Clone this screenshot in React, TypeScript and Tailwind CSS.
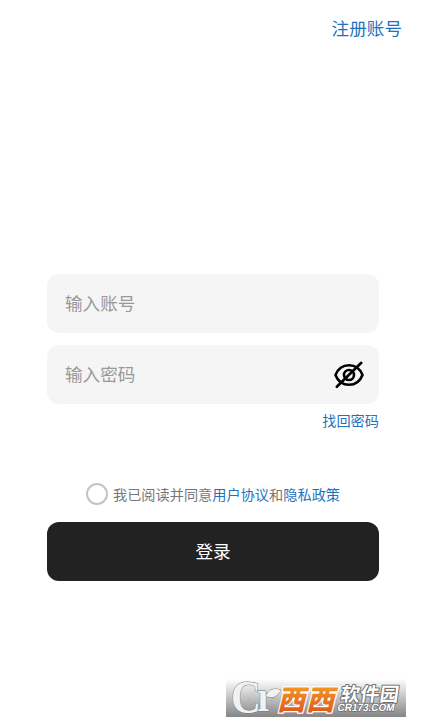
import React, { useState } from 'react';

interface FieldProps {
  name: string;
  type: string;
  placeholder: string;
  value: string;
  onChange: (e: React.ChangeEvent<HTMLInputElement>) => void;
  children?: React.ReactNode;
}

const Field: React.FC<FieldProps> = ({ name, type, placeholder, value, onChange, children }) => (
  <div className="flex h-[59px] items-center rounded-xl bg-[#f5f5f5] pl-[18px] pr-3.5">
    <input
      className="min-w-0 flex-1 bg-transparent text-[17.6px] text-[#222222] outline-none placeholder:text-[#999999]"
      name={name}
      type={type}
      placeholder={placeholder}
      value={value}
      onChange={onChange}
    />
    {children}
  </div>
);

const EyeOffIcon = () => (
  <svg width="32" height="30" viewBox="0 0 32 30" fill="none" stroke="#000" strokeWidth="2.6" strokeLinecap="round">
    <path d="M2.5 15C5 8.4 10 5.2 16 5.2S27 8.4 29.5 15C27 21.6 22 24.8 16 24.8S5 21.6 2.5 15Z" />
    <circle cx="16" cy="15" r="5" />
    <path d="M3.8 26.8 28.3 2.8" />
  </svg>
);

const SiteBadge = () => (
  <svg className="block" width="180" height="38" viewBox="0 0 180 38">
    <defs>
      <linearGradient id="badge" x1="0" y1="0" x2="0" y2="1">
        <stop offset="0" stopColor="#fff" />
        <stop offset="1" stopColor="#858585" />
      </linearGradient>
      <linearGradient id="orange" x1="0" y1="0" x2="0" y2="1">
        <stop offset="0" stopColor="#f9ad2b" />
        <stop offset="1" stopColor="#dd4d18" />
      </linearGradient>
    </defs>
    <rect width="180" height="38" fill="url(#badge)" />
    <g fill="#f1f1f1" stroke="#777" strokeWidth="1" paintOrder="stroke">
      <text x="5" y="33.5" fontFamily="Liberation Serif, serif" fontWeight="700" fontSize="46" textLength="30" lengthAdjust="spacingAndGlyphs">C</text>
      <text x="31" y="32" fontFamily="Liberation Serif, serif" fontWeight="700" fontSize="44" textLength="17" lengthAdjust="spacingAndGlyphs">r</text>
      <path d="M40 17C43 10 48 9 55 11C51 18 46 20 40 17Z" />
    </g>
    <g fontFamily="Noto Sans CJK SC, sans-serif" fontWeight="900" strokeLinejoin="round" paintOrder="stroke">
      <g transform="translate(51 30.5) skewX(-14)" fontSize="28" fill="url(#orange)" stroke="#fff" strokeWidth="2.5">
        <text x="0" y="0" textLength="28" lengthAdjust="spacingAndGlyphs">西</text>
        <text x="29" y="0" textLength="28" lengthAdjust="spacingAndGlyphs">西</text>
      </g>
      <text transform="translate(114 21.5) skewX(-8)" fontSize="19" fontWeight="700" fill="#fff" stroke="#707070" strokeWidth="2" textLength="58">软件园</text>
    </g>
    <text transform="translate(111 31.5) skewX(-10)" fontFamily="Liberation Sans, sans-serif" fontWeight="700" fontSize="10.5" fill="#fff" stroke="#707070" strokeWidth="1.5" paintOrder="stroke" textLength="57" lengthAdjust="spacingAndGlyphs">CR173.COM</text>
  </svg>
);

const LoginPage: React.FC = () => {
  const [formData, setFormData] = useState({ account: '', password: '' });
  const [showPassword, setShowPassword] = useState(false);
  const [agreed, setAgreed] = useState(false);

  const handleChange = (e: React.ChangeEvent<HTMLInputElement>) => {
    const { name, value } = e.target;
    setFormData((prevData) => ({ ...prevData, [name]: value }));
  };

  return (
    <div className="flex h-[727px] w-[426px] flex-col bg-white font-['Noto_Sans_CJK_SC',sans-serif]">
      <header className="flex justify-end pr-6 pt-4">
        <button className="text-[17.6px] leading-6 text-[#1f73bd]" type="button">注册账号</button>
      </header>

      <form className="mx-[47px] mt-[234px] flex flex-col" onSubmit={(e) => e.preventDefault()}>
        <div className="flex flex-col gap-3">
          <Field name="account" type="text" placeholder="输入账号" value={formData.account} onChange={handleChange} />
          <Field
            name="password"
            type={showPassword ? 'text' : 'password'}
            placeholder="输入密码"
            value={formData.password}
            onChange={handleChange}
          >
            <button type="button" onClick={() => setShowPassword(!showPassword)}>
              <EyeOffIcon />
            </button>
          </Field>
        </div>
        <button className="mt-1.5 self-end text-[14.2px] leading-5 text-[#1f73bd]" type="button">找回密码</button>

        <div className="mt-[53px] flex h-[21px] items-center justify-center gap-[5px] text-[14.2px] leading-5 text-[#777777]">
          <button
            className={`size-[22px] rounded-full border-2 border-[#c4c4c8] ${agreed ? 'bg-[#1f73bd]' : 'bg-white'}`}
            type="button"
            onClick={() => setAgreed(!agreed)}
          />
          <p>
            我已阅读并同意<span className="text-[#1f73bd]">用户协议</span>和<span className="text-[#1f73bd]">隐私政策</span>
          </p>
        </div>
        <button className="mt-[18px] h-[59px] rounded-xl bg-[#222222] text-[17.6px] text-white" type="submit">
          登录
        </button>
      </form>

      <footer className="mt-auto flex justify-end pb-2.5 pr-5">
        <SiteBadge />
      </footer>
    </div>
  );
};

export default LoginPage;
